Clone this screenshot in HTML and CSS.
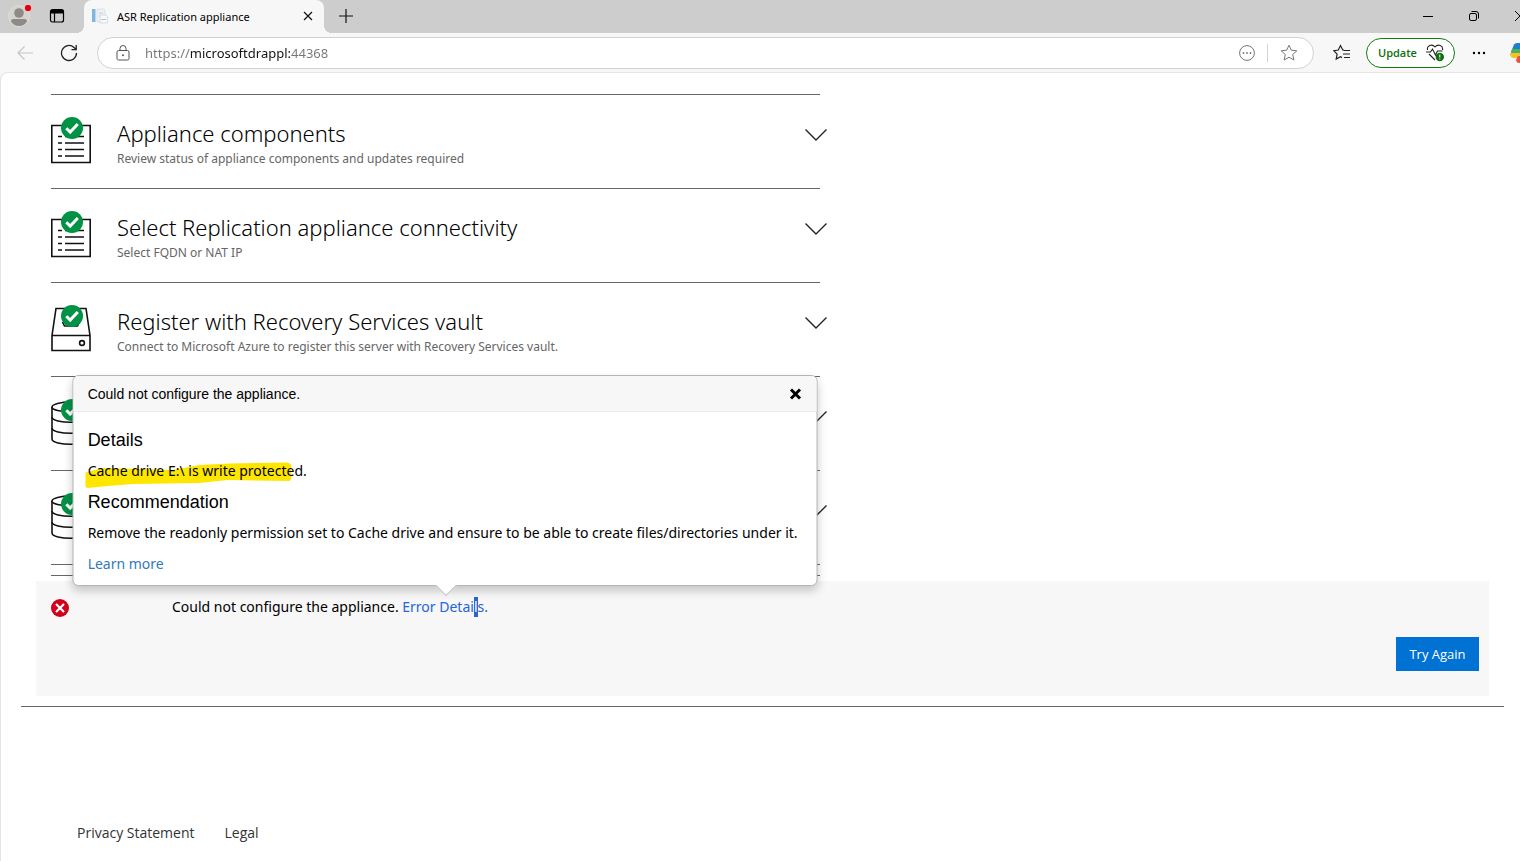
FILE: index.html
```
<!DOCTYPE html>
<html lang="en">
<head>
	<meta charset="utf-8">
	<meta name="viewport" content="width=device-width, initial-scale=1.0">
	<title>ASR Replication appliance</title>
	<link rel="stylesheet" href="styles.css">
</head>
<body>
	<!-- shared icons -->
	<svg class="sprite" aria-hidden="true">
		<symbol id="icon-tick" viewBox="0 0 22 22">
			<circle cx="11" cy="11" r="11" fill="#009245"/>
			<path d="M5.300 11.200l3.900 3.900L16.800 7" fill="none" stroke="#fff" stroke-width="3"/>
		</symbol>
		<symbol id="icon-list" viewBox="0 0 40 47">
			<path d="M.8 8.500h38.400v37H.8z" fill="#fff" stroke="#111" stroke-width="1.600"/>
			<path d="M7 19.500h4M7 26h4M7 32.500h4M7 39h4M14 19.500h19M14 26h19M14 32.500h19M14 39h19" stroke="#111" stroke-width="1.600"/>
			<use href="#icon-tick" x="10" y="0" width="22" height="22"/>
		</symbol>
		<symbol id="icon-vault" viewBox="0 0 40 47">
			<path d="M1 30.500L5 3.500h30l4 27v15H1zM1 30.500h38" fill="#fff" stroke="#111" stroke-width="1.600"/>
			<path d="M11.500 17l2 4h13l2-4" fill="none" stroke="#111" stroke-width="1.600"/>
			<circle cx="31" cy="38" r="2.400" fill="none" stroke="#111" stroke-width="1.600"/>
			<use href="#icon-tick" x="10" y="0" width="22" height="22"/>
		</symbol>
		<symbol id="icon-disks" viewBox="0 0 40 47">
			<path d="M1 8v32c0 7 38 7 38 0V8" fill="#fff" stroke="#111" stroke-width="1.600"/>
			<ellipse cx="20" cy="8" rx="19" ry="5" fill="#fff" stroke="#111" stroke-width="1.600"/>
			<path d="M1 18c0 7 38 7 38 0M1 29c0 7 38 7 38 0" fill="none" stroke="#111" stroke-width="1.600"/>
			<use href="#icon-tick" x="10" y="0" width="22" height="22"/>
		</symbol>
		<symbol id="icon-chevron" viewBox="0 0 22 12">
			<path d="M.5.5L11 11 21.500.5" fill="none" stroke="#222" stroke-width="1.400"/>
		</symbol>
	</svg>

	<header class="browser">
		<div class="tab-strip">
			<button class="icon-btn profile" aria-label="Profile">
				<svg width="24" height="24" viewBox="0 0 24 24"><circle cx="11" cy="12" r="10.500" fill="#d5d2cf" stroke="#deded6"/><circle cx="11" cy="9" r="4.800" fill="#8e8a87"/><path d="M3 17.500q0-2.500 2.500-2.500h11q2.500 0 2.500 2.500-3 4.500-8 4.500t-8-4.500z" fill="#8e8a87"/><circle cx="20" cy="4" r="3.800" fill="#e3000f" stroke="#e6dada"/></svg>
			</button>
			<button class="icon-btn tab-actions" aria-label="Tab actions">
				<svg width="16" height="16" viewBox="0 0 16 16"><rect x="1.500" y="1.500" width="13" height="12.500" rx="2" fill="none" stroke="#000" stroke-width="1.200"/><path d="M2 2h12v3.500H2z"/><path d="M5.500 5v9" stroke="#000" stroke-width="1.200"/></svg>
			</button>
			<div class="tab">
				<svg width="16" height="16" viewBox="0 0 16 16"><path d="M0 1h3.500v13H0z" fill="#7db7e0"/><path d="M5 1h7l1 1v12H5z" fill="#eef1f5" stroke="#d3d9e0" stroke-width=".7"/><path d="M7 5h4M7 8h3" stroke="#c4ccd6"/><path d="M8 7h6l1.500 1.500V15H8z" fill="#f6f8fa" stroke="#cbd2da" stroke-width=".7"/><path d="M9 11.500h5" stroke="#b8c1cb"/></svg>
				<span class="tab-title">ASR Replication appliance</span>
				<button class="icon-btn" aria-label="Close tab">
					<svg width="10" height="10" viewBox="0 0 10 10"><path d="M1 1l8 8M9 1L1 9" stroke="#111" stroke-width="1.200"/></svg>
				</button>
			</div>
			<button class="icon-btn new-tab" aria-label="New tab">
				<svg width="14" height="14" viewBox="0 0 14 14"><path d="M7 0v14M0 7h14" stroke="#111" stroke-width="1.200"/></svg>
			</button>
			<div class="window-controls">
				<button class="icon-btn" aria-label="Minimize">
					<svg width="10" height="10" viewBox="0 0 10 10"><path d="M0 5.500h10" stroke="#000"/></svg>
				</button>
				<button class="icon-btn" aria-label="Restore">
					<svg width="10" height="10" viewBox="0 0 10 10"><rect x=".5" y="2.500" width="7" height="7" rx="1.500" fill="none" stroke="#000"/><path d="M2.500.5H7Q9.500.5 9.500 3v4.500" fill="none" stroke="#000"/></svg>
				</button>
				<button class="icon-btn" aria-label="Close window">
					<svg width="10" height="10" viewBox="0 0 10 10"><path d="M0 0l10 10M10 0L0 10" stroke="#000"/></svg>
				</button>
			</div>
		</div>

		<div class="toolbar">
			<button class="icon-btn back" aria-label="Back">
				<svg width="16" height="14" viewBox="0 0 16 14"><path d="M7.500.5L1 7l6.500 6.500M1 7h15" fill="none" stroke="#c6c6c6" stroke-width="1.200"/></svg>
			</button>
			<button class="icon-btn reload" aria-label="Refresh">
				<svg width="18" height="18" viewBox="0 0 18 18"><path d="M16.500 9A7.500 7.500 0 1 1 14 3.400L16 5.500M16.200 1v4.700h-4.700" fill="none" stroke="#222" stroke-width="1.300"/></svg>
			</button>
			<div class="address-bar">
				<svg class="lock" width="14" height="16" viewBox="0 0 14 16"><rect x="1" y="5.500" width="12" height="9.500" rx="1.500" fill="none" stroke="#555"/><path d="M4 5.500V3.500a3 3 0 0 1 6 0v2" fill="none" stroke="#555"/><circle cx="7" cy="10.200" r="1" fill="#555"/></svg>
				<input class="url" type="text" aria-label="Address" value="https://microsoftdrappl:44368">
				<button class="icon-btn" aria-label="Site options">
					<svg width="16" height="16" viewBox="0 0 16 16"><circle cx="8" cy="8" r="7.400" fill="none" stroke="#767676"/><g fill="#767676"><circle cx="4.500" cy="8" r=".9"/><circle cx="8" cy="8" r=".9"/><circle cx="11.500" cy="8" r=".9"/></g></svg>
				</button>
				<span class="divider"></span>
				<button class="icon-btn" aria-label="Add to favorites">
					<svg width="18" height="18" viewBox="0 0 18 18"><path d="M9 1.200l2.300 5 5.500.6-4.100 3.700 1.200 5.500L9 13.200 4.100 16l1.200-5.500L1.200 6.800l5.500-.6z" fill="none" stroke="#767676" stroke-linejoin="round"/></svg>
				</button>
			</div>
			<button class="icon-btn favorites" aria-label="Favorites">
				<svg width="18" height="18" viewBox="0 0 18 18"><path d="M11 6.200L9.800 6 7.500 1.500 5.300 6l-4.500.7 3.300 3.400-.9 5 4.300-2.300 1.500.8M11 6.500h6M10 10h7M11 13.500h6" fill="none" stroke="#222" stroke-width="1.200"/></svg>
			</button>
			<button class="update">
				<span>Update</span>
				<svg width="19" height="18" viewBox="0 0 19 18"><path d="M1.500 6C.5 1.500 6-.5 9 3c3-3.500 8.500-1.500 7.500 3M3 10l6 6M0 8h4.500l2-3 3 6 2-4h5" fill="none" stroke="#222" stroke-width="1.100"/><circle cx="13.800" cy="13" r="4.200" fill="#0e700e"/><path d="M13.800 10.500v3M13.800 14.500v1" stroke="#fff"/></svg>
			</button>
			<button class="icon-btn more" aria-label="Settings and more">
				<svg width="14" height="4" viewBox="0 0 14 4"><circle cx="2" cy="2" r="1.200"/><circle cx="7" cy="2" r="1.200"/><circle cx="12" cy="2" r="1.200"/></svg>
			</button>
			<button class="icon-btn copilot" aria-label="Copilot">
				<svg width="22" height="22" viewBox="0 0 22 22"><path d="M4 2.500Q5 1 7 1h11v9H1z" fill="#1b7fd2"/><path d="M2 7l-1 4q-1 4 3 4h5l3-8z" fill="#4eaf5a"/><path d="M0 11h11l-3 5H4q-4 0-4-5z" fill="#f3c326"/><path d="M6 18l2-4h10v7H9q-2.500 0-3-3z" fill="#f0503c"/></svg>
			</button>
		</div>
	</header>

	<main class="page">
		<section class="steps">
			<div class="step">
				<svg class="step-icon"><use href="#icon-list"/></svg>
				<div class="step-text">
					<h2>Appliance components</h2>
					<p>Review status of appliance components and updates required</p>
				</div>
				<button class="toggle" aria-label="Expand Appliance components"><svg width="22" height="12"><use href="#icon-chevron"/></svg></button>
			</div>
			<div class="step">
				<svg class="step-icon"><use href="#icon-list"/></svg>
				<div class="step-text">
					<h2>Select Replication appliance connectivity</h2>
					<p>Select FQDN or NAT IP</p>
				</div>
				<button class="toggle" aria-label="Expand Select Replication appliance connectivity"><svg width="22" height="12"><use href="#icon-chevron"/></svg></button>
			</div>
			<div class="step">
				<svg class="step-icon"><use href="#icon-vault"/></svg>
				<div class="step-text">
					<h2>Register with Recovery Services vault</h2>
					<p>Connect to Microsoft Azure to register this server with Recovery Services vault.</p>
				</div>
				<button class="toggle" aria-label="Expand Register with Recovery Services vault"><svg width="22" height="12"><use href="#icon-chevron"/></svg></button>
			</div>
			<div class="step">
				<svg class="step-icon"><use href="#icon-disks"/></svg>
				<div class="step-text"></div>
				<button class="toggle" aria-label="Expand step 4"><svg width="22" height="12"><use href="#icon-chevron"/></svg></button>
			</div>
			<div class="step">
				<svg class="step-icon"><use href="#icon-disks"/></svg>
				<div class="step-text"></div>
				<button class="toggle" aria-label="Expand step 5"><svg width="22" height="12"><use href="#icon-chevron"/></svg></button>
			</div>
			<div class="steps-end"></div>
		</section>

		<section class="status">
			<div class="status-message">
				<svg class="status-icon" width="18" height="18" viewBox="0 0 18 18"><circle cx="9" cy="9" r="9" fill="#d0021b"/><path d="M5 5l8 8M13 5l-8 8" stroke="#fff" stroke-width="2.200"/></svg>
				<p>Could not configure the appliance.
					<span class="error-link">
						<a href="#details">Error Detai<span class="selected">l</span>s.</a>
						<span class="popover" id="details" role="dialog" aria-label="Could not configure the appliance.">
							<span class="popover-head">
								<span>Could not configure the appliance.</span>
								<button class="icon-btn" aria-label="Close"><svg width="12" height="12" viewBox="0 0 12 12"><path d="M1.500 1.500l9 9M10.500 1.500l-9 9" stroke="#000" stroke-width="3"/></svg></button>
							</span>
							<span class="popover-body">
								<span class="popover-title">Details</span>
								<span class="popover-text marked">
									<svg class="marker" width="206" height="26" viewBox="0 0 206 26"><path d="M0 10.500L17 6l70 2 27-5 31-1.500 57-1q4 1 4 4V17l-2 2-62-1-28 3-66 1-26 2-20 2-2-1-2-7z" fill="#ffe600"/></svg>
									<span>Cache drive E:\ is write protected.</span>
								</span>
								<span class="popover-title">Recommendation</span>
								<span class="popover-text">Remove the readonly permission set to Cache drive and ensure to be able to create files/directories under it.</span>
								<a class="learn-more" href="#learn">Learn more</a>
							</span>
						</span>
					</span>
				</p>
			</div>
			<button class="try-again">Try Again</button>
		</section>

		<footer class="footer">
			<a href="#privacy">Privacy Statement</a>
			<a href="#legal">Legal</a>
		</footer>
	</main>
</body>
</html>
```
FILE: styles.css
```
* {
	box-sizing: border-box;
}

html, body {
	height: 100%;
	margin: 0;
	padding: 0;
}

body {
	display: flex;
	flex-direction: column;
	overflow: hidden;
	background: #f7f7f7;
	color: #000;
	font-family: "Segoe UI", "Noto Sans", sans-serif;
	font-size: 14px;
}

h2, p {
	margin: 0;
}

a {
	text-decoration: none;
}

button {
	font-family: inherit;
	cursor: pointer;
}

svg {
	display: block;
	flex: none;
}

.sprite {
	position: absolute;
	width: 0;
	height: 0;
}

.icon-btn {
	flex: none;
	margin: 0;
	padding: 0;
	border: 0;
	background: none;
}

/* browser frame */
.tab-strip {
	display: flex;
	align-items: center;
	height: 33px;
	padding-bottom: 1px;
	background: #cdcdcd;
}

.profile {
	margin: 0 17px 0 8px;
}

.tab-actions {
	margin-right: 19px;
}

.tab {
	position: relative;
	display: flex;
	align-items: center;
	align-self: flex-start;
	gap: 9px;
	width: 240px;
	height: 33px;
	padding: 0 11px 1px 8px;
	border-radius: 8px 8px 0 0;
	background: #f7f7f7;
}

/* curved feet of the active tab */
.tab::before,
.tab::after {
	content: "";
	position: absolute;
	bottom: 0;
	width: 8px;
	height: 8px;
}

.tab::before {
	right: 100%;
	background: radial-gradient(circle at 0 0, #cdcdcd 8px, #f7f7f7 8px);
}

.tab::after {
	left: 100%;
	background: radial-gradient(circle at 100% 0, #cdcdcd 8px, #f7f7f7 8px);
}

.tab-title {
	flex: 1;
	font-size: 11px;
	white-space: nowrap;
}

.new-tab {
	margin-left: 15px;
}

.window-controls {
	display: flex;
	gap: 36px;
	margin-left: auto;
	margin-right: -5px;
}

.toolbar {
	display: flex;
	align-items: center;
	height: 39px;
	padding-left: 17px;
}

.reload {
	margin: 0 19px 0 27px;
}

.address-bar {
	display: flex;
	flex: 1;
	align-items: center;
	gap: 12px;
	height: 32px;
	padding: 0 15px;
	border: 1px solid #d2d2d2;
	border-radius: 16px;
	background: #fff;
}

.lock {
	margin: 0 3px;
}

/* scheme and port are grey, the host name is black */
.url {
	flex: 1;
	min-width: 0;
	padding: 0;
	border: 0;
	outline: 0;
	background: linear-gradient(90deg, #767676 46px, #111 46px, #111 145px, #767676 145px);
	background-clip: text;
	-webkit-background-clip: text;
	color: transparent;
	caret-color: #111;
	font-family: inherit;
	font-size: 13px;
}

.divider {
	width: 1px;
	height: 18px;
	background: #d2d2d2;
}

.favorites {
	margin: 0 15px 0 19px;
}

.update {
	display: flex;
	align-items: center;
	justify-content: space-between;
	width: 89px;
	height: 30px;
	padding: 0 9px 0 11px;
	border: 1px solid #107c10;
	border-radius: 15px;
	background: #fff;
	color: #0e700e;
	font-family: "Segoe UI", "Open Sans", sans-serif;
	font-size: 11px;
	font-weight: 600;
}

.more {
	margin: 0 24px 0 17px;
}

.copilot {
	margin-right: -12px;
}

/* appliance page */
.page {
	flex: 1;
	padding: 21px 16px 0 20px;
	border: 1px solid #e5e5e5;
	border-right: 0;
	border-bottom: 0;
	border-radius: 8px 0 0 0;
	background: #fff;
}

.steps {
	max-width: 769px;
	margin-left: 30px;
}

.step {
	display: flex;
	align-items: flex-start;
	height: 94px;
	padding-top: 22px;
	border-top: 1px solid #666;
}

.step-icon {
	width: 40px;
	height: 47px;
}

.step-text {
	flex: 1;
	padding-left: 26px;
}

.step-text h2 {
	font-size: 22px;
	font-weight: 300;
	line-height: 33px;
}

.step-text p {
	color: #666;
	font-size: 12px;
	line-height: 18px;
}

.toggle {
	margin: 12px -7px 0 0;
	padding: 0;
	border: 0;
	background: none;
}

.steps-end {
	height: 12px;
	border: 1px solid #666;
	border-width: 1px 0;
}

.status {
	display: flex;
	flex-direction: column;
	justify-content: space-between;
	min-height: 115px;
	margin: 5px 15px 10px;
	padding: 16px 10px 25px 15px;
	background: #f7f7f7;
}

.status-message {
	display: flex;
	gap: 103px;
	line-height: 20px;
}

.status-icon {
	margin-top: 2px;
}

.error-link {
	position: relative;
	display: inline-block;
}

.error-link > a {
	color: #2563dd;
}

.selected {
	display: inline-block;
	background: #2f62d0;
	color: #fff;
}

.try-again {
	align-self: flex-end;
	width: 83px;
	height: 34px;
	padding: 0;
	border: 0;
	background: #0072d4;
	color: #fff;
	font-family: "Segoe UI", "Open Sans", sans-serif;
	font-size: 13px;
}

.popover {
	position: absolute;
	bottom: 100%;
	left: 50%;
	width: 745px;
	margin-bottom: 11px;
	border: 1px solid #b4b4b4;
	border-radius: 6px;
	background: #fff;
	box-shadow: 0 5px 10px rgba(0, 0, 0, 0.2);
	transform: translateX(-50%);
}

/* arrow pointing at the link */
.popover::after {
	content: "";
	position: absolute;
	bottom: -8px;
	left: 50%;
	width: 14px;
	height: 14px;
	margin-left: -7px;
	border: 1px solid #c0c0c0;
	border-width: 0 1px 1px 0;
	background: #fff;
	transform: rotate(45deg);
}

.popover-head {
	display: flex;
	align-items: center;
	justify-content: space-between;
	height: 36px;
	padding: 0 15px 0 14px;
	border-bottom: 1px solid #ebebeb;
	border-radius: 5px 5px 0 0;
	background: #f7f7f7;
	font-family: Arial, "Liberation Sans", sans-serif;
}

.popover-body {
	display: block;
	padding: 8px 14px 10px;
}

.popover-title {
	display: block;
	padding: 10px 0;
	font-family: Arial, "Liberation Sans", sans-serif;
	font-size: 18px;
	line-height: 20px;
}

.popover-text {
	display: block;
	line-height: 22px;
	white-space: nowrap;
}

.marked {
	position: relative;
}

.marked span {
	position: relative;
}

.marker {
	position: absolute;
	top: 2px;
	left: -2px;
}

.learn-more {
	display: block;
	margin-top: 9px;
	color: #337ab7;
	line-height: 22px;
}

.footer {
	display: flex;
	gap: 30px;
	padding: 116px 56px 0;
	border-top: 1px solid #666;
	font-family: "Segoe UI", "Open Sans", sans-serif;
	line-height: 20px;
}

.footer a {
	color: #333;
}
```
